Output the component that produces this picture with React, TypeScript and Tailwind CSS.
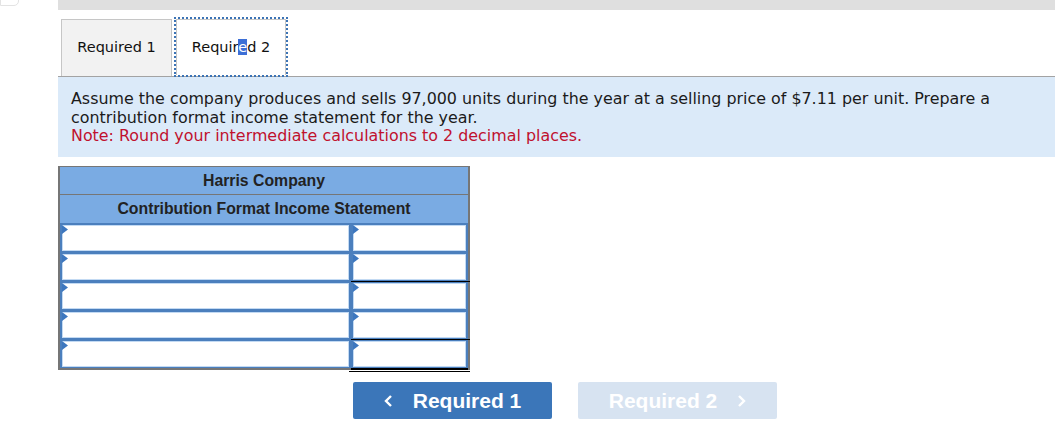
import React from "react";

const rows = [
  { totalLine: false },
  { totalLine: true },
  { totalLine: false },
  { totalLine: true },
  { totalLine: false },
];

const Marker = () => (
  <svg
    className="absolute left-[2px] top-[2px]"
    width="6"
    height="9"
    viewBox="0 0 6 9"
  >
    <path d="M0 0 L6 4.5 L0 9 Z" fill="#3d77bf" />
  </svg>
);

const Cell = ({ className }: { className: string }) => (
  <div className={`relative bg-[#4b7fbd] pt-[2px] pb-[1px] px-[2px] ${className}`}>
    <div className="h-full border border-[#c3daf3] bg-white"></div>
    <Marker />
  </div>
);

const Chevron = ({ dir }: { dir: "left" | "right" }) => (
  <svg width="9" height="14" viewBox="0 0 9 14" className="shrink-0">
    <polyline
      points={dir === "left" ? "7,2 2,7 7,12" : "2,2 7,7 2,12"}
      fill="none"
      stroke="white"
      strokeWidth="2.4"
    />
  </svg>
);

export default function App() {
  return (
    <div className="relative w-[1055px] h-[434px] bg-white overflow-hidden font-['DejaVu_Sans',sans-serif]">
      {/* little rounded box at top-left */}
      <div className="absolute left-0 top-[-4px] w-[19px] h-[10px] border border-[#e3e3e3] rounded-br-[5px]"></div>

      <div className="ml-[58px]">
        <div className="h-[10px] bg-[#dfdfdf]"></div>

        {/* Tabs */}
        <div className="flex items-end h-[67px] pl-[3px] border-b border-[#a3a3a3]">
          <div className="w-[111px] h-[57px] flex items-center justify-center bg-[#f2f2f2] border border-b-0 border-[#c6c6c6] text-[14.5px] text-[#111]">
            Required 1
          </div>
          <div className="ml-[2px] mb-[-1px] w-[114px] h-[60px] border-2 border-dotted border-[#3b73b5]">
            <div className="h-full flex items-center justify-center bg-white border border-[#c6c6c6] border-b-0 text-[14.5px] text-[#111]">
              <span>
                Requir<span className="bg-[#3d6fd6] text-white">e</span>d 2
              </span>
            </div>
          </div>
        </div>

        {/* Prompt */}
        <div className="h-[80px] bg-[#dbeaf9] pl-[13px] pt-[13px] text-[15.9px] leading-[18.7px] text-[#1b1b1b]">
          <p>
            Assume the company produces and sells 97,000 units during the year
            at a selling price of $7.11 per unit. Prepare a contribution format
            income statement for the year.
          </p>
          <p className="text-[#c0112e]">
            Note: Round your intermediate calculations to 2 decimal places.
          </p>
        </div>

        {/* Statement table */}
        <div className="mt-[9px] w-[412px] border-l-2 border-r-2 border-t border-[#767676] font-['Liberation_Sans',Arial,sans-serif]">
          <div className="h-[28px] bg-[#7aabe3] border-b border-[#767676] flex items-center justify-center text-[15.8px] font-bold text-[#222]">
            Harris Company
          </div>
          <div className="h-[28px] bg-[#7aabe3] flex items-center justify-center text-[15.8px] font-bold text-[#222]">
            Contribution Format Income Statement
          </div>
          {rows.map((r, i) => (
            <div key={i} className="flex h-[29px]">
              <Cell className="w-[291px]" />
              <div className="relative flex-1 flex">
                <Cell className="flex-1" />
                {r.totalLine && (
                  <div className="absolute left-0 right-[-2px] bottom-[-1px] h-[1px] bg-black z-10"></div>
                )}
              </div>
            </div>
          ))}
          <div className="flex h-[2px]">
            <div className="w-[291px] bg-[#767676]"></div>
            <div className="flex-1 bg-black"></div>
          </div>
        </div>
        <div className="flex w-[412px]">
          <div className="w-[291px]"></div>
          <div className="flex-1 h-[1px] mt-[1px] bg-black"></div>
        </div>

        {/* Nav buttons */}
        <div className="flex gap-[26px] ml-[295px] mt-[10px] font-['Liberation_Sans',Arial,sans-serif]">
          <button className="w-[199px] h-[37px] rounded-[2px] bg-[#3b76b9] text-white text-[21px] font-bold flex items-center justify-center gap-[20px]">
            <Chevron dir="left" />
            Required 1
          </button>
          <button className="w-[199px] h-[37px] rounded-[2px] bg-[#d7e3f1] text-white text-[21px] font-bold flex items-center justify-center gap-[20px]">
            Required 2
            <Chevron dir="right" />
          </button>
        </div>
      </div>
    </div>
  );
}
